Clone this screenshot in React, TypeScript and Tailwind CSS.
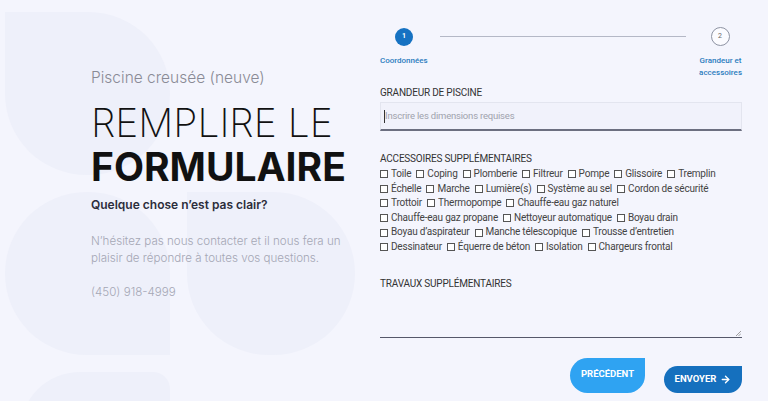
import { ArrowRight } from 'lucide-react'

const rows: string[][] = [
  ['Toile', 'Coping', 'Plomberie', 'Filtreur', 'Pompe', 'Glissoire', 'Tremplin'],
  ['Échelle', 'Marche', 'Lumière(s)', 'Système au sel', 'Cordon de sécurité'],
  ['Trottoir', 'Thermopompe', 'Chauffe-eau gaz naturel'],
  ['Chauffe-eau gaz propane', 'Nettoyeur automatique', 'Boyau drain'],
  ['Boyau d’aspirateur', 'Manche télescopique', 'Trousse d’entretien'],
  ['Dessinateur', 'Équerre de béton', 'Isolation', 'Chargeurs frontal'],
]

const heading = { fontFamily: 'Inter, "Open Sans", sans-serif' }
const body = { fontFamily: 'Roboto, "Liberation Sans", sans-serif' }

function Backdrop() {
  return (
    <div className="pointer-events-none absolute left-[5px] top-[12px] grid grid-cols-[165px_168px] gap-x-[17px] gap-y-[17px]">
      <div className="h-[163px] rounded-[82px] rounded-tl-none bg-[#eef0fa]" />
      <div />
      <div className="h-[163px] rounded-[82px] rounded-br-none bg-[#eef0fa]" />
      <div className="h-[163px] rounded-[82px] rounded-tl-none bg-[#eef0fa]" />
      <div className="ml-[15px] h-[60px] rounded-tl-[70px] rounded-tr-[20px] bg-[#eef0fa]" />
    </div>
  )
}

function Stepper() {
  return (
    <div className="flex flex-col" style={body}>
      <div className="flex items-center">
        <div className="flex w-[48px] justify-center">
          <span className="flex h-[18px] w-[18px] items-center justify-center rounded-full bg-[#1672c2] text-[7px] font-bold text-white">
            1
          </span>
        </div>
        <div className="mx-[12px] h-px flex-1 bg-[#b4b8c6]" />
        <div className="flex w-[44px] justify-center">
          <span className="flex h-[19px] w-[19px] items-center justify-center rounded-full border border-[#8e93a3] bg-[#fbfbff] text-[7px] text-[#666]">
            2
          </span>
        </div>
      </div>
      <div className="mt-[9px] flex justify-between text-[8px] font-medium leading-[12px] text-[#2b7cbd]">
        <span>Coordonnées</span>
        <span className="text-center">
          Grandeur et
          <br />
          accessoires
        </span>
      </div>
    </div>
  )
}

export default function App() {
  return (
    <div className="relative h-[401px] w-[768px] overflow-hidden bg-[#f4f5fd]">
      <Backdrop />
      <div className="relative flex">
        {/* Left */}
        <div className="flex-1 whitespace-nowrap pl-[91px] pt-[66px]" style={heading}>
          <p className="text-[15.5px] font-light text-[#8a8b96]">Piscine creusée (neuve)</p>
          <h1 className="mt-[12px] text-[39px] leading-[44px] text-[#111]">
            <span className="block font-extralight">REMPLIRE LE</span>
            <span className="block font-bold">FORMULAIRE</span>
          </h1>
          <p className="mt-[7px] text-[12px] font-semibold text-[#2c2d3b]">Quelque chose n’est pas clair?</p>
          <p className="mt-[19px] text-[11.6px] font-light leading-[17px] text-[#a5a7b5]">
            N’hésitez pas nous contacter et il nous fera un
            <br />
            plaisir de répondre à toutes vos questions.
          </p>
          <p className="mt-[17px] text-[11.6px] font-light text-[#a5a7b5]">(450) 918-4999</p>
        </div>

        {/* Right */}
        <div className="mr-[26px] w-[362px] pt-[27px]" style={body}>
          <Stepper />

          <label className="mt-[7px] block text-[10px] leading-[14px] tracking-[-0.2px] text-[#333]">
            GRANDEUR DE PISCINE
          </label>
          <div className="mt-[2px] flex h-[29px] items-center border border-b-2 border-[#e3e5ef] border-b-[#6c6f80] bg-[#f1f2fb] px-[3px]">
            <span className="h-[13px] w-px bg-[#333]" />
            <span className="text-[9.5px] tracking-[-0.2px] text-[#a0a2ad]">Inscrire les dimensions requises</span>
          </div>

          <label className="mt-[21px] block text-[10px] leading-[14px] tracking-[-0.2px] text-[#333]">
            ACCESSOIRES SUPPLÉMENTAIRES
          </label>
          <div className="mt-[1px] flex flex-col text-[10px] leading-[14.6px] tracking-[-0.2px] text-[#444]">
            {rows.map((row, i) => (
              <div key={i} className="flex gap-[5px]">
                {row.map((item) => (
                  <span key={item} className="flex items-center gap-[3px]">
                    <span className="h-[8px] w-[8px] border border-[#555] bg-white" />
                    {item}
                  </span>
                ))}
              </div>
            ))}
          </div>

          <label className="mt-[22px] block text-[10px] leading-[14px] tracking-[-0.2px] text-[#333]">
            TRAVAUX SUPPLÉMENTAIRES
          </label>
          <div className="relative mt-[1px] h-[46px] border-b-[1.5px] border-[#55586a]">
            <svg className="absolute bottom-[1px] right-[1px]" width="6" height="6" viewBox="0 0 6 6">
              <path d="M1 6 L6 1 M3.5 6 L6 3.5" stroke="#888" strokeWidth="0.8" />
            </svg>
          </div>

          <div className="mt-[20px] flex items-end justify-end gap-[19px]">
            <button className="h-[35px] w-[75px] rounded-[18px] rounded-tr-none bg-[#2fa3f2] pb-[2px] text-[9.5px] font-bold text-white">
              PRÉCÉDENT
            </button>
            <button className="flex h-[27px] w-[78px] items-center justify-center gap-[4px] rounded-[14px] rounded-tr-none bg-[#1570be] text-[9.5px] font-bold text-white">
              ENVOYER
              <ArrowRight size={11} strokeWidth={3} />
            </button>
          </div>
        </div>
      </div>
    </div>
  )
}
